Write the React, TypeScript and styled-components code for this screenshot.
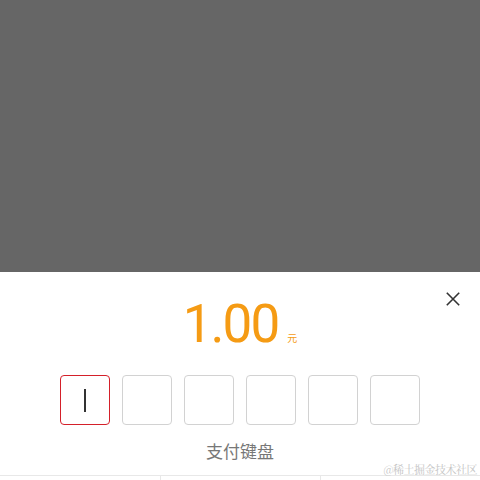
import React from 'react'
import styled, { createGlobalStyle } from 'styled-components'

const GlobalStyle = createGlobalStyle`
  html, body {
    margin: 0;
    padding: 0;
    background: #fff;
    font-family: "Noto Sans", "Noto Sans CJK SC", sans-serif;
  }
`

const Page = styled.div`
  position: relative;
  width: 480px;
  height: 480px;
  overflow: hidden;
  display: flex;
  flex-direction: column;
`

const Mask = styled.div`
  height: 272px;
  flex-shrink: 0;
  background-color: #666666;
`

const Sheet = styled.div`
  position: relative;
  background: #fff;
  display: flex;
  flex-direction: column;
  align-items: center;
`

const CloseButton = styled.button`
  position: absolute;
  top: 14px;
  right: 14px;
  width: 26px;
  height: 26px;
  padding: 0;
  border: none;
  background: transparent;
  display: flex;
  align-items: center;
  justify-content: center;
`

const Amount = styled.div`
  margin-top: 20px;
  height: 64px;
  display: flex;
  align-items: baseline;
  color: #f59b14;
`

const Money = styled.span`
  font-family: Roboto, "Noto Sans", sans-serif;
  font-weight: 400;
  font-size: 53px;
  line-height: 64px;
  letter-spacing: -2px;
`

const Unit = styled.span`
  margin-left: 9px;
  font-family: "Noto Sans CJK SC", sans-serif;
  font-size: 10px;
`

const Boxes = styled.div`
  margin-top: 19px;
  display: flex;
  gap: 12px;
`

const Box = styled.div<{ $active?: boolean }>`
  width: 50px;
  height: 50px;
  box-sizing: border-box;
  border: 1.5px solid ${(p) => (p.$active ? '#d4202a' : '#d2d2d2')};
  border-radius: 4px;
  display: flex;
  align-items: center;
  justify-content: center;
`

const Caret = styled.div`
  width: 1.5px;
  height: 23px;
  background: #333;
`

const Title = styled.div`
  margin-top: 12px;
  height: 28px;
  line-height: 28px;
  font-family: "Noto Sans CJK SC", sans-serif;
  font-size: 17px;
  color: #777;
`

const Keyboard = styled.div`
  margin-top: 10px;
  width: 100%;
  display: grid;
  grid-template-columns: repeat(3, 1fr);
  border-top: 1px solid #e8e8e8;
`

const Key = styled.div`
  height: 50px;
  & + & {
    border-left: 1px solid #e8e8e8;
  }
`

const Watermark = styled.div`
  position: absolute;
  right: 3px;
  bottom: 3px;
  font-family: "Noto Serif CJK SC", "Noto Sans CJK SC", serif;
  font-size: 11px;
  color: #c4c4c4;
  letter-spacing: -0.5px;
`

function CloseIcon() {
  return (
    <svg width="14" height="14" viewBox="0 0 14 14">
      <path d="M0.8 0.8 L13.2 13.2 M13.2 0.8 L0.8 13.2" stroke="#333" strokeWidth="1.6" fill="none" />
    </svg>
  )
}

export default function App() {
  const slots = [0, 1, 2, 3, 4, 5]
  return (
    <>
      <GlobalStyle />
      <Page>
        <Mask />
        <Sheet>
          <CloseButton aria-label="close">
            <CloseIcon />
          </CloseButton>
          <Amount>
            <Money>1.00</Money>
            <Unit>元</Unit>
          </Amount>
          <Boxes>
            {slots.map((i) => (
              <Box key={i} $active={i === 0}>
                {i === 0 && <Caret />}
              </Box>
            ))}
          </Boxes>
          <Title>支付键盘</Title>
          <Keyboard>
            <Key />
            <Key />
            <Key />
          </Keyboard>
        </Sheet>
        <Watermark>@稀土掘金技术社区</Watermark>
      </Page>
    </>
  )
}
